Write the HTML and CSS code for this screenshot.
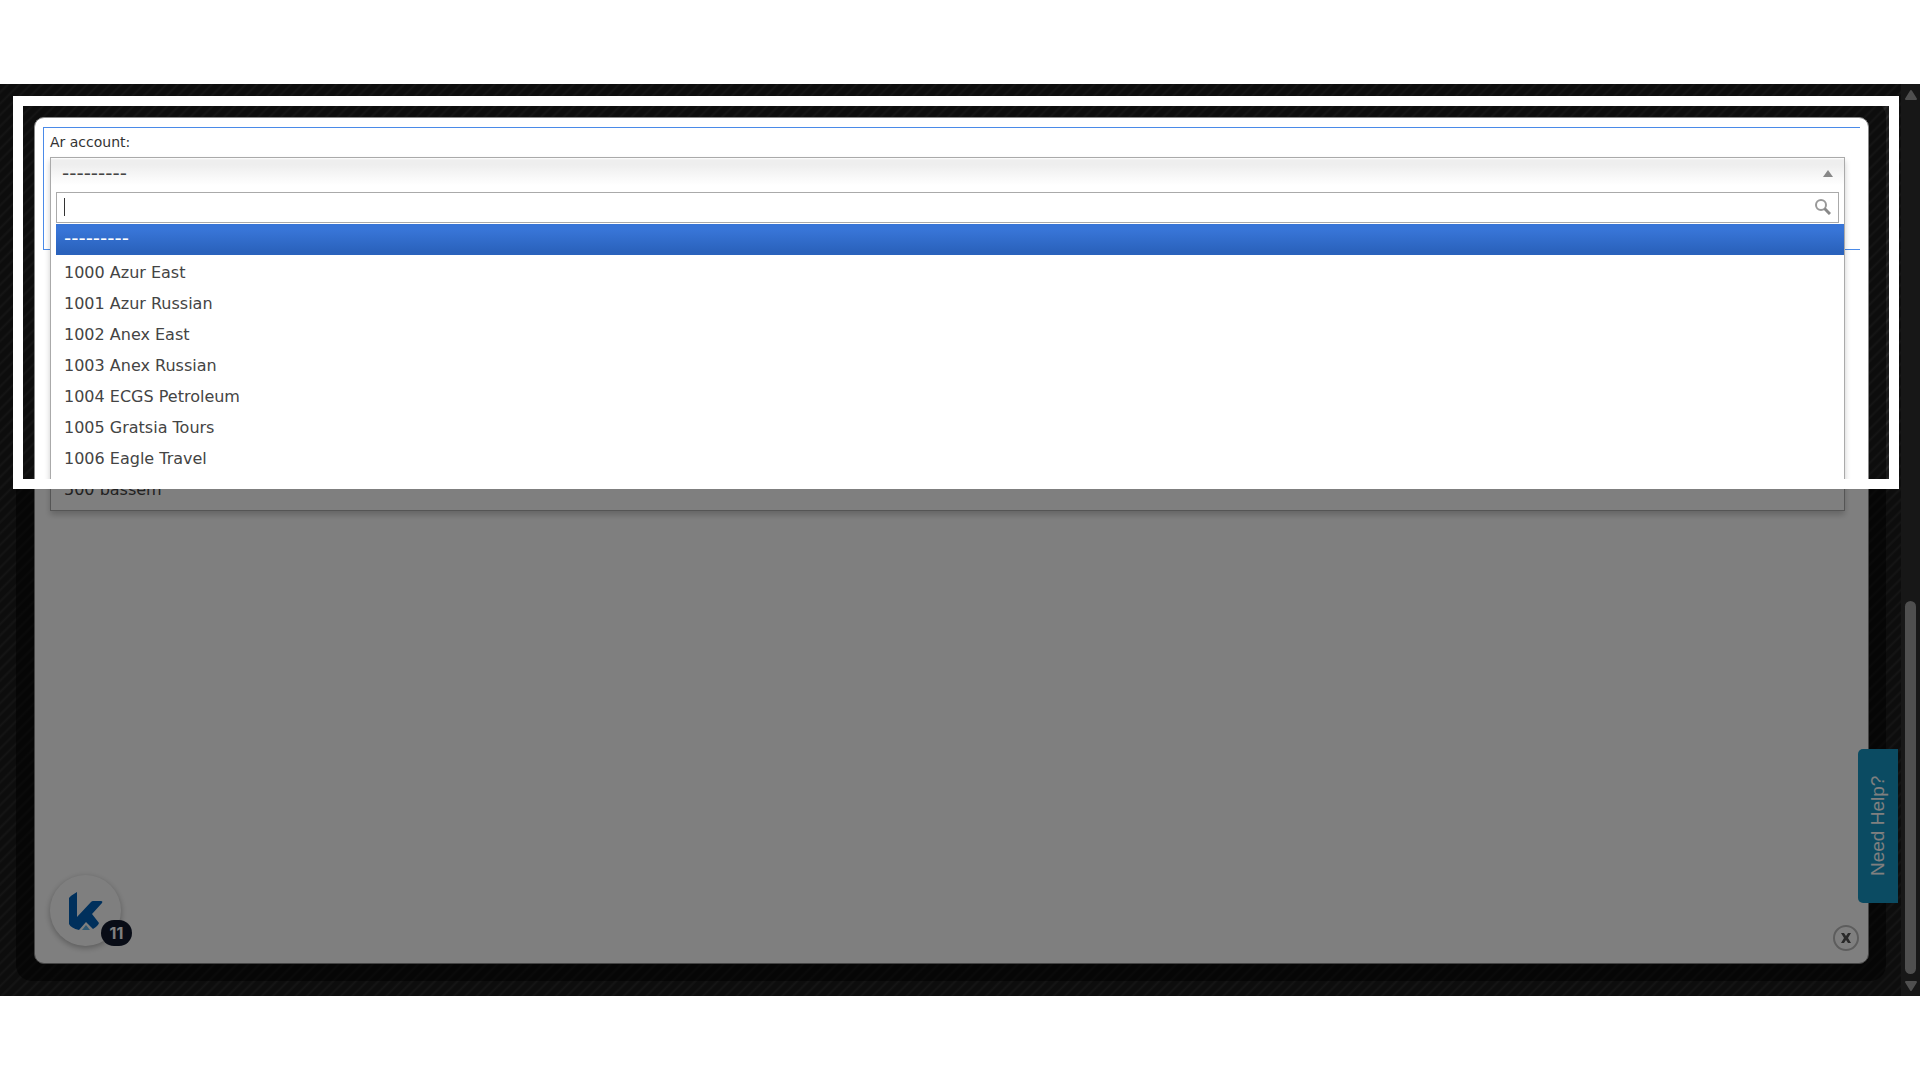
FILE: index.html
```html
<!DOCTYPE html>
<html lang="en">
<head>
<meta charset="utf-8">
<title>Ar account</title>
<link rel="stylesheet" href="styles.css">
</head>
<body>
<main class="viewport">
  <div class="page">
    <div class="shell">
      <section class="dialog" role="dialog" aria-label="Ar account">
        <div class="fieldset">
          <label class="field-label" for="account-search">Ar account:</label>
          <div class="picker">
            <button class="picker-value" type="button" aria-expanded="true"><span class="blank">---------</span><i class="caret"></i></button>
            <div class="picker-drop">
              <div class="search">
                <input id="account-search" class="search-input" type="text" autocomplete="off">
                <svg class="search-icon" viewBox="0 0 16 16" width="16" height="16" aria-hidden="true"><circle cx="6" cy="6" r="5" fill="none" stroke="#999" stroke-width="2"/><path d="M9.5 9.5L15 15" stroke="#888" stroke-width="3"/></svg>
              </div>
              <ul class="options">
                <li class="option active"><span class="blank">---------</span></li>
                <li class="option">1000 Azur East</li>
                <li class="option">1001 Azur Russian</li>
                <li class="option">1002 Anex East</li>
                <li class="option">1003 Anex Russian</li>
                <li class="option">1004 ECGS Petroleum</li>
                <li class="option">1005 Gratsia Tours</li>
                <li class="option">1006 Eagle Travel</li>
                <li class="option">500 bassem</li>
              </ul>
            </div>
          </div>
        </div>
        <footer class="dialog-footer">
          <button class="launcher" type="button" aria-label="Guides, 11 items">
            <svg viewBox="0 0 34 38" width="34" height="38" aria-hidden="true"><path d="M0 6Q1 4 8 0V25L22 10Q23 9 24 9H32Q34 9 33 11L23 22L30 31Q29 34 24 37L17 30L10 38Q2 36 0 32Z" fill="#0060b8"/><path d="M13 38L17 33L21 38Z" fill="#62b4e8"/></svg>
            <span class="count">11</span>
          </button>
          <button class="close" type="button" aria-label="Close"><svg viewBox="0 0 12 12" width="12" height="12" aria-hidden="true"><path d="M1 1H4L6 4L8 1H11L8 6L11 11H8L6 8L4 11H1L4 6Z" fill="#555"/></svg></button>
        </footer>
      </section>
    </div>
    <button class="help" type="button">Need Help?</button>
    <div class="spotlight"></div>
  </div>
  <div class="scrollbar" aria-hidden="true">
    <svg viewBox="0 0 14 12" width="14" height="12"><path d="M7 2L12 10H2Z" fill="#4f4f4f" stroke="#4f4f4f" stroke-width="2" stroke-linejoin="round"/></svg>
    <div class="track"><div class="thumb"></div></div>
    <svg viewBox="0 0 14 12" width="14" height="12"><path d="M7 10L12 2H2Z" fill="#4f4f4f" stroke="#4f4f4f" stroke-width="2" stroke-linejoin="round"/></svg>
  </div>
</main>
</body>
</html>
```
FILE: styles.css
```css
* { box-sizing: border-box; }

body {
  margin: 0;
  min-height: 100vh;
  padding: 84px 0;
  display: flex;
  background: #fff;
  font-family: "DejaVu Sans", Verdana, sans-serif;
  color: #333;
}

button { font: inherit; padding: 0; border: 0; cursor: pointer; }

.viewport { flex: 1; display: flex; }

.page {
  position: relative;
  flex: 1;
  display: flex;
  overflow: hidden;
  padding: 17px 15px 15px 16px;
  background: repeating-linear-gradient(135deg, #1a1a1a 0 4px, #2b2b2b 6px, #1a1a1a 8px);
}

.shell {
  flex: 1;
  display: flex;
  padding: 16px 17px 17px 18px;
  border-radius: 16px;
  background: rgba(0, 0, 0, .5);
}

.dialog {
  flex: 1;
  display: flex;
  flex-direction: column;
  justify-content: space-between;
  padding: 9px 8px 12px 8px;
  border: 1px solid #888;
  border-radius: 10px;
  background: #fff;
}

.fieldset {
  height: 123px;
  padding: 4px 15px 0 6px;
  border: 1px solid #4a8ae8;
  border-right: 0;
}

.field-label { display: block; margin-bottom: 5px; font-size: 14px; line-height: 20px; }

.picker {
  border: 1px solid #aaa;
  background: #fff;
  box-shadow: 0 4px 6px rgba(0, 0, 0, .2);
  font-size: 16px;
}

.picker-value {
  display: flex;
  justify-content: space-between;
  align-items: center;
  width: 100%;
  height: 34px;
  padding: 0 11px 4px;
  background: linear-gradient(#fff 0, #eee 2px, #eee 20%, #fff 80%);
  color: #444;
  line-height: 30px;
}

.blank { font-size: 20px; }

.caret {
  border: 5px solid transparent;
  border-top: 0;
  border-bottom: 7px solid #888;
}

.picker-drop { padding: 0 0 5px 5px; }

.search {
  display: flex;
  align-items: center;
  height: 31px;
  margin: 0 5px 1px 0;
  padding: 0 7px 2px;
  border: 1px solid #aaa;
}

/* Text cursor of the empty search box. */
.search::before { content: ""; width: 1px; height: 18px; background: #333; }

.search-input { flex: 1; padding: 0; border: 0; outline: 0; background: none; font: inherit; line-height: 20px; }

.options { margin: 0; padding: 0; list-style: none; }

.option { height: 31px; padding: 0 8px; line-height: 32px; color: #444; }

.option.active {
  margin-bottom: 2px;
  background: linear-gradient(#3875d7 20%, #2a62bc 90%);
  color: #fff;
  line-height: 28px;
}

.dialog-footer { display: flex; justify-content: space-between; align-items: flex-end; padding: 0 1px 0 7px; }

.launcher {
  position: relative;
  display: grid;
  place-items: center;
  width: 71px;
  height: 71px;
  margin-bottom: 5px;
  border-radius: 50%;
  background: #fff;
  box-shadow: 0 2px 6px rgba(0, 0, 0, .3);
}

.count {
  position: absolute;
  right: -11px;
  bottom: 0;
  width: 31px;
  border-radius: 13px;
  background: #10182c;
  color: #fff;
  font: bold 16px/26px Inter, sans-serif;
}

.close {
  display: grid;
  place-items: center;
  width: 26px;
  height: 26px;
  border: 2px solid #bbb;
  border-radius: 50%;
  background: #fff;
}

.help {
  position: absolute;
  right: 3px;
  bottom: 93px;
  width: 40px;
  height: 154px;
  border-radius: 0 5px 5px 0;
  background: #1697c4;
  color: #fff;
  font: 19px/40px "Liberation Sans", Arial, sans-serif;
  writing-mode: vertical-rl;
  transform: rotate(180deg);
}

/* Cut-out of the guided tour: the large shadow dims everything around it. */
.spotlight {
  position: absolute;
  top: 12px;
  left: 13px;
  right: 2px;
  height: 393px;
  border: 10px solid #fff;
  box-shadow: 0 0 0 2000px rgba(0, 0, 0, .5);
  pointer-events: none;
}

.scrollbar {
  display: flex;
  flex-direction: column;
  align-items: center;
  gap: 6px;
  width: 19px;
  padding: 5px 0 4px;
  background: #171717;
}

.track { flex: 1; display: flex; flex-direction: column; justify-content: flex-end; }

.thumb { width: 11px; height: 43%; border-radius: 6px; background: #4f4f4f; }
```
